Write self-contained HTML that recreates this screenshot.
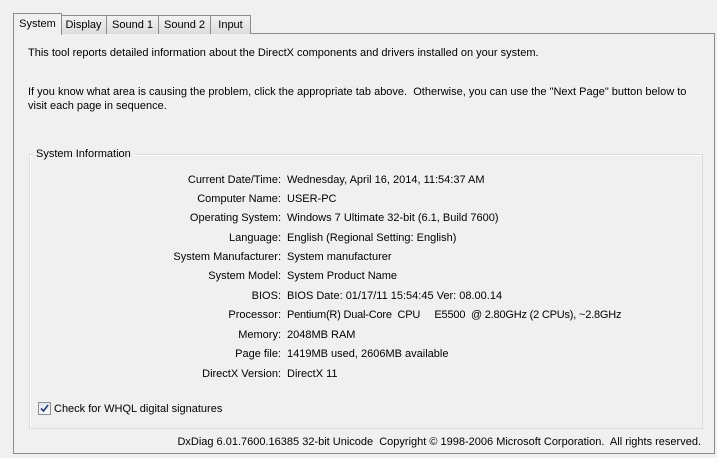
<!DOCTYPE html>
<html><head><style>
body{margin:0;width:717px;height:458px;background:#f0f0f0;font-family:"Liberation Sans",sans-serif;font-size:11px;color:#000;position:relative;overflow:hidden}
.a{position:absolute;white-space:nowrap}
.tab{position:absolute;top:15px;height:18px;border:1px solid #898c95;border-bottom:none;background:linear-gradient(#f2f2f2,#dcdcdc);line-height:18px;text-align:center}
.panel{position:absolute;left:13px;top:33px;width:700px;height:419px;border:1px solid #898c95;background:#f0f0f0}
.grp{position:absolute;left:29px;top:154px;width:672px;height:273px;border:1px solid #d5dfe5;box-shadow:inset 1px 1px 0 #fff}
.l{position:absolute;right:436px;white-space:nowrap}
.v{position:absolute;left:287px;white-space:nowrap}
</style></head><body>
<div class="panel"></div>
<div class="tab" style="left:60px;width:45px">Display</div>
<div class="tab" style="left:106px;width:51px">Sound 1</div>
<div class="tab" style="left:158px;width:51px">Sound 2</div>
<div class="tab" style="left:210px;width:39px">Input</div>
<div class="tab" style="left:13px;top:13px;height:21px;width:47px;background:#f0f0f0;line-height:20px">System</div>
<div class="a" style="left:28px;top:47px">This tool reports detailed information about the DirectX components and drivers installed on your system.</div>
<div class="a" style="left:28px;top:86px">If you know what area is causing the problem, click the appropriate tab above.&nbsp; Otherwise, you can use the "Next Page" button below to</div>
<div class="a" style="left:28px;top:100px">visit each page in sequence.</div>
<div class="grp"></div>
<div class="a" style="left:33px;top:148px;background:#f0f0f0;padding:0 3px">System Information</div>
<div class="l" style="top:174px">Current Date/Time:</div><div class="v" style="top:174px">Wednesday, April 16, 2014, 11:54:37 AM</div>
<div class="l" style="top:193px">Computer Name:</div><div class="v" style="top:193px">USER-PC</div>
<div class="l" style="top:212px">Operating System:</div><div class="v" style="top:212px">Windows 7 Ultimate 32-bit (6.1, Build 7600)</div>
<div class="l" style="top:232px">Language:</div><div class="v" style="top:232px">English (Regional Setting: English)</div>
<div class="l" style="top:251px">System Manufacturer:</div><div class="v" style="top:251px">System manufacturer</div>
<div class="l" style="top:270px">System Model:</div><div class="v" style="top:270px">System Product Name</div>
<div class="l" style="top:290px">BIOS:</div><div class="v" style="top:290px">BIOS Date: 01/17/11 15:54:45 Ver: 08.00.14</div>
<div class="l" style="top:309px">Processor:</div><div class="v" style="top:309px;letter-spacing:-0.2px">Pentium(R) Dual-Core&nbsp; CPU&nbsp;&nbsp;&nbsp;&nbsp; E5500&nbsp; @ 2.80GHz (2 CPUs), ~2.8GHz</div>
<div class="l" style="top:329px">Memory:</div><div class="v" style="top:329px">2048MB RAM</div>
<div class="l" style="top:348px">Page file:</div><div class="v" style="top:348px">1419MB used, 2606MB available</div>
<div class="l" style="top:368px">DirectX Version:</div><div class="v" style="top:368px">DirectX 11</div>
<div class="a" style="left:38px;top:402px;width:11px;height:11px;border:1px solid #8f8f8f;background:linear-gradient(#dfe6f0,#f8f8f8)"><svg width="11" height="11" style="position:absolute;left:0;top:0"><path d="M2 5.5 L4.5 8 L9 2" stroke="#2a3c78" stroke-width="1.6" fill="none"/></svg></div>
<div class="a" style="left:54px;top:403px">Check for WHQL digital signatures</div>
<div class="a" style="right:16px;top:436px">DxDiag 6.01.7600.16385 32-bit Unicode&nbsp; Copyright © 1998-2006 Microsoft Corporation.&nbsp; All rights reserved.</div>
</body></html>
